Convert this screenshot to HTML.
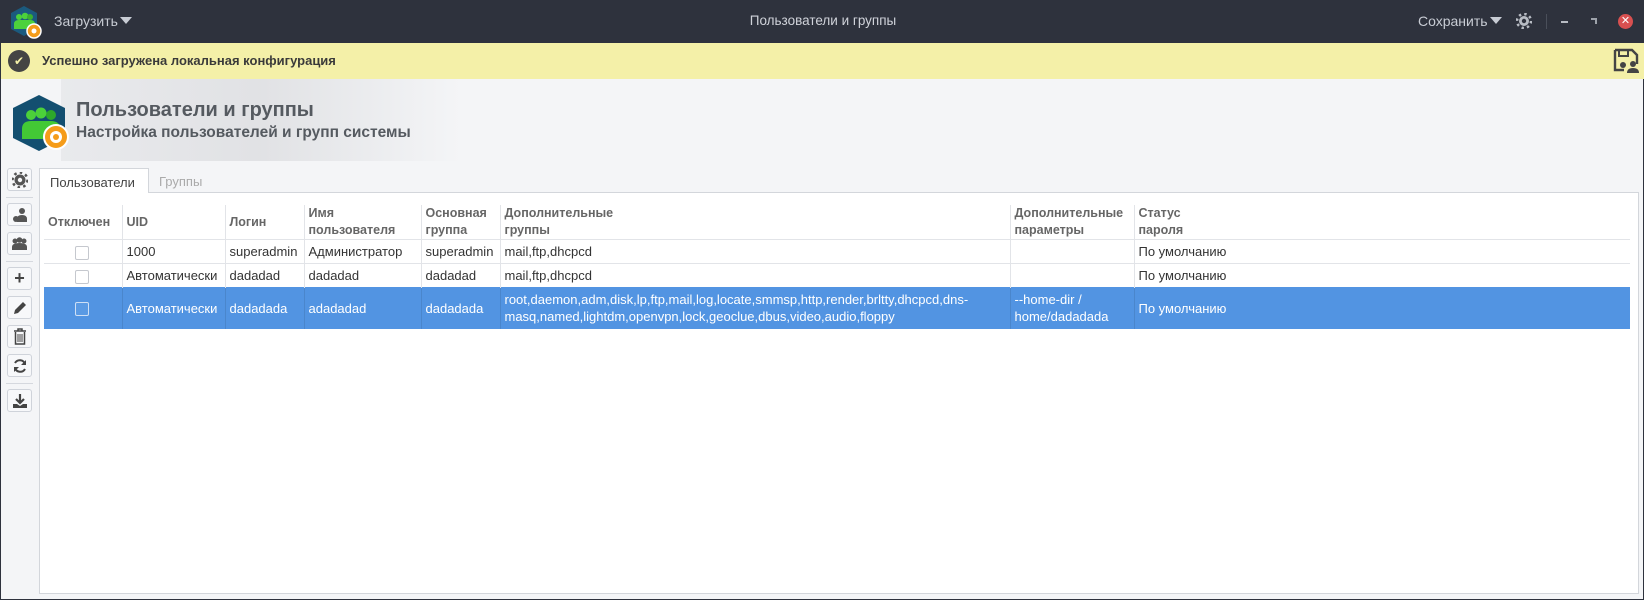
<!DOCTYPE html>
<html><head><meta charset="utf-8"><style>
*{box-sizing:border-box;margin:0;padding:0}
body{width:1644px;height:600px;overflow:hidden;background:#f4f5f7;font-family:"Liberation Sans","DejaVu Sans",sans-serif;font-size:13px;color:#333;position:relative;border-left:1px solid #2e323d;border-right:1px solid #2e323d;border-bottom:1px solid #2e323d}
.abs{position:absolute}
#top{left:0;top:0;width:1644px;height:43px;background:#2e323d;color:#c8ccd4}
#msg{left:0;top:43px;width:1644px;height:36px;background:#f4f0a8}
.btn{position:absolute;left:6px;width:25px;height:23px;border:1px solid #cfd3da;border-radius:3px;background:#f7f8fa;display:flex;align-items:center;justify-content:center}
.sep{position:absolute;left:5px;width:27px;height:1px;background:#d5d8de}
#panel{left:38px;top:192px;width:1600px;height:402px;background:#fff;border:1px solid #d3d6db}
table{border-collapse:collapse;position:absolute;left:4px;top:12px;table-layout:fixed}
td,th{font-weight:normal;text-align:left;vertical-align:middle;padding:0 4px;line-height:17px;overflow:hidden;white-space:nowrap}
th{color:#666;font-weight:bold;font-size:12.5px;height:34px;border-left:1px solid #e2e4e8}
th:first-child{border-left:none}
td{border-left:1px solid #e2e4e8;border-top:1px solid #e2e4e8;height:24px;color:#333}
td:first-child{border-left:none}
tr.sel td{background:#5294e2;color:#fff;border-left-color:#4a86cc;height:41px;border-top:1px solid #5294e2}
.cb{display:inline-block;width:14px;height:14px;border:1px solid #c5c8ce;border-radius:2px;background:#fff;margin-left:27px;vertical-align:middle}
tr.sel .cb{background:#5a9ae4;border-color:#cfe0f5}
.tri{display:inline-block;width:0;height:0;border-left:6px solid transparent;border-right:6px solid transparent;border-top:7px solid #c8ccd4;margin-left:2px;vertical-align:2px}
</style></head><body>
<div id="top" class="abs">
 <svg class="abs" style="left:9px;top:5px" width="32" height="34" viewBox="0 0 32 34"><polygon points="14,1 27,8 27,24 14,31 1,24 1,8" fill="#1b5a7e"/><circle cx="9" cy="12" r="3" fill="#4cd13c"/><circle cx="15" cy="11" r="3.3" fill="#4cd13c"/><circle cx="20" cy="12" r="3" fill="#3bb02e"/><path d="M4 24v-5q0-4 5-4h11q5 0 5 4v5z" fill="#4cd13c"/><circle cx="24" cy="26" r="7" fill="#f59c1a" stroke="#fff" stroke-width="1.5"/><circle cx="24" cy="26" r="2.5" fill="#fff"/></svg>
 <div class="abs" style="left:53px;top:13px;font-size:14px">Загрузить<span class="tri"></span></div>
 <div class="abs" style="left:0;width:1644px;top:13px;text-align:center;font-size:13.5px;color:#d0d3da">Пользователи и группы</div>
 <div class="abs" style="left:1417px;top:13px;font-size:14px">Сохранить<span class="tri"></span></div>
 <svg class="abs" style="left:1515px;top:13px" width="16" height="16" viewBox="0 0 16 16"><circle cx="8" cy="8" r="5" fill="#b8bcc4"/><circle cx="8" cy="8" r="7" fill="none" stroke="#b8bcc4" stroke-width="2.5" stroke-dasharray="2.4 3.1"/><circle cx="8" cy="8" r="2.2" fill="#2e323d"/></svg>
 <div class="abs" style="left:1545px;top:14px;width:1px;height:15px;background:#4a4f5a"></div>
 <div class="abs" style="left:1560px;top:21px;width:7px;height:2px;background:#b8bcc4"></div>
 <div class="abs" style="left:1590px;top:18px;width:6px;height:6px;border-top:2px solid #9ea3ab;border-right:2px solid #9ea3ab"></div>
 <div class="abs" style="left:1617px;top:14px;width:15px;height:15px;border-radius:50%;background:#d85050;color:#fff;font-size:11px;line-height:15px;text-align:center;font-weight:bold">✕</div>
</div>
<div id="msg" class="abs">
 <div class="abs" style="left:7px;top:7px;width:22px;height:22px;border-radius:50%;background:#444;color:#f4f0a8;text-align:center;line-height:22px;font-size:12px;font-weight:bold">✔</div>
 <div class="abs" style="left:41px;top:10px;font-weight:bold;font-size:13px;color:#3a3a3a">Успешно загружена локальная конфигурация</div>
 <svg class="abs" style="left:1612px;top:5px" width="26" height="26" viewBox="0 0 26 26"><path d="M2 2h17l5 5v9M2 2v20h9" fill="none" stroke="#444" stroke-width="2.4"/><rect x="6" y="2" width="9" height="6" fill="none" stroke="#444" stroke-width="2"/><circle cx="10" cy="17" r="3" fill="#444"/><circle cx="20" cy="16" r="3" fill="#444"/><path d="M14 25q0-5 6-5t6 5z" fill="#444"/></svg>
</div>
<div class="abs" style="left:60px;top:79px;width:400px;height:82px;background:linear-gradient(90deg,#e6e7ea 0%,#dcdde0 50%,#f4f5f7 100%);opacity:.8"></div>
<svg class="abs" style="left:9px;top:93px" width="62" height="62" viewBox="0 0 62 62"><polygon points="29,2 55,15 55,45 29,58 3,45 3,15" fill="#134f70"/><circle cx="21" cy="22" r="5" fill="#4bd13a"/><circle cx="31" cy="20" r="5.5" fill="#4bd13a"/><circle cx="41" cy="22" r="5" fill="#2da82a"/><path d="M12 46v-10q0-8 9-8h20q9 0 9 8v10z" fill="#43c935"/><circle cx="46" cy="44" r="12" fill="#f59c1a" stroke="#fff" stroke-width="2"/><circle cx="46" cy="44" r="6" fill="#fff"/><circle cx="46" cy="44" r="3" fill="#f59c1a"/></svg>
<div class="abs" style="left:75px;top:99px;font-size:20px;font-weight:bold;color:#555a60">Пользователи и группы</div>
<div class="abs" style="left:75px;top:124px;font-size:15.5px;font-weight:bold;color:#555a60">Настройка пользователей и групп системы</div>

<div class="btn" style="top:168px"><svg width="16" height="16" viewBox="0 0 16 16"><circle cx="8" cy="8" r="5.5" fill="#555"/><circle cx="8" cy="8" r="7.5" fill="none" stroke="#555" stroke-width="2.5" stroke-dasharray="2.6 3.2"/><circle cx="8" cy="8" r="2.2" fill="#f7f8fa"/></svg></div>
<div class="sep" style="top:197px"></div>
<div class="btn" style="top:203px"><svg width="16" height="16" viewBox="0 0 16 16"><circle cx="10" cy="4" r="3" fill="#555"/><path d="M5 15v-3q0-4 5-4t5 4v3z" fill="#555"/><circle cx="4" cy="12" r="3" fill="#555"/></svg></div>
<div class="btn" style="top:232px"><svg width="17" height="14" viewBox="0 0 17 14"><circle cx="4" cy="4" r="2.5" fill="#555"/><circle cx="8.5" cy="3" r="2.8" fill="#555"/><circle cx="13" cy="4" r="2.5" fill="#555"/><path d="M1 13v-3q0-4 7.5-4t7.5 4v3z" fill="#555"/></svg></div>
<div class="sep" style="top:261px"></div>
<div class="btn" style="top:267px;font-size:18px;color:#444;font-weight:bold">+</div>
<div class="btn" style="top:296px"><svg width="16" height="16" viewBox="0 0 16 16"><path d="M2 14l1-4 8-8 3 3-8 8z" fill="#444"/></svg></div>
<div class="btn" style="top:325px"><svg width="14" height="17" viewBox="0 0 14 17"><path d="M1 3h12M5 3V1h4v2M2.5 4v12h9V4" fill="none" stroke="#444" stroke-width="1.5"/><path d="M5 6v8M7 6v8M9 6v8" stroke="#444"/></svg></div>
<div class="btn" style="top:354px"><svg width="16" height="16" viewBox="0 0 16 16"><path d="M13 6A5.5 5.5 0 0 0 3 5M3 10a5.5 5.5 0 0 0 10 1" fill="none" stroke="#444" stroke-width="2"/><path d="M14 2v5h-5zM2 14V9h5z" fill="#444"/></svg></div>
<div class="sep" style="top:383px"></div>
<div class="btn" style="top:389px"><svg width="16" height="16" viewBox="0 0 16 16"><path d="M8 1v9M4 6l4 4 4-4" fill="none" stroke="#444" stroke-width="2.2"/><path d="M1 11h4l3 2 3-2h4v4H1z" fill="#444"/></svg></div>

<div class="abs" style="left:38px;top:168px;width:110px;height:25px;background:#fff;border:1px solid #d3d6db;border-bottom:none;z-index:2;padding:6px 0 0 10px;color:#444">Пользователи</div>
<div class="abs" style="left:158px;top:174px;color:#aaa">Группы</div>
<div id="panel" class="abs">
<table>
<colgroup><col style="width:78px"><col style="width:103px"><col style="width:79px"><col style="width:117px"><col style="width:79px"><col style="width:510px"><col style="width:124px"><col style="width:496px"></colgroup>
<tr><th>Отключен</th><th>UID</th><th>Логин</th><th>Имя<br>пользователя</th><th>Основная<br>группа</th><th>Дополнительные<br>группы</th><th>Дополнительные<br>параметры</th><th>Статус<br>пароля</th></tr>
<tr><td><span class="cb"></span></td><td>1000</td><td>superadmin</td><td>Администратор</td><td>superadmin</td><td>mail,ftp,dhcpcd</td><td></td><td>По умолчанию</td></tr>
<tr><td><span class="cb"></span></td><td>Автоматически</td><td>dadadad</td><td>dadadad</td><td>dadadad</td><td>mail,ftp,dhcpcd</td><td></td><td>По умолчанию</td></tr>
<tr class="sel"><td><span class="cb"></span></td><td>Автоматически</td><td>dadadada</td><td>adadadad</td><td>dadadada</td><td>root,daemon,adm,disk,lp,ftp,mail,log,locate,smmsp,http,render,brltty,dhcpcd,dns-<br>masq,named,lightdm,openvpn,lock,geoclue,dbus,video,audio,floppy</td><td>--home-dir /<br>home/dadadada</td><td>По умолчанию</td></tr>
</table>
</div>
</body></html>
